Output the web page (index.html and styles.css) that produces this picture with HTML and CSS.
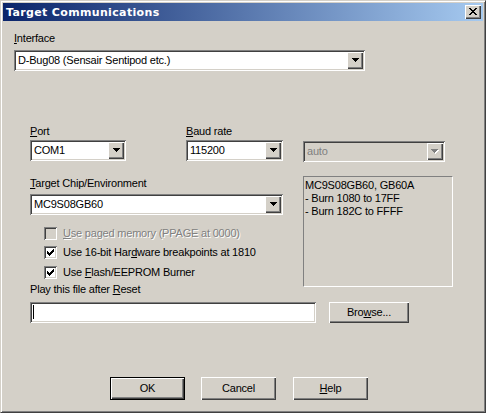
FILE: index.html
```html
<!DOCTYPE html>
<html>
<head>
<meta charset="utf-8">
<link rel="stylesheet" href="styles.css">
</head>
<body>
<div class="window">
  <div class="titlebar">
    <span class="title">Target Communications</span>
    <span class="close"><svg width="8" height="7" viewBox="0 0 8 7" shape-rendering="crispEdges"><path d="M0 0h2v1h-2zM6 0h2v1h-2zM1 1h2v1h-2zM5 1h2v1h-2zM2 2h4v1h-4zM3 3h2v1h-2zM2 4h4v1h-4zM1 5h2v1h-2zM5 5h2v1h-2zM0 6h2v1h-2zM6 6h2v1h-2z" fill="#000"/></svg></span>
  </div>
  <div class="content">
    <div class="label"><u>I</u>nterface</div>
    <div class="combo combo-interface"><span class="combo-text">D-Bug08 (Sensair Sentipod etc.)</span><span class="combo-btn"><svg width="7" height="4" viewBox="0 0 7 4" shape-rendering="crispEdges"><path d="M0 0h7v1h-7zM1 1h5v1h-5zM2 2h3v1h-3zM3 3h1v1h-1z" fill="#000"/></svg></span></div>

    <div class="mid">
      <div class="left">
        <div class="pb">
          <div class="col col-port">
            <div class="label"><u>P</u>ort</div>
            <div class="combo combo-port"><span class="combo-text">COM1</span><span class="combo-btn"><svg width="7" height="4" viewBox="0 0 7 4" shape-rendering="crispEdges"><path d="M0 0h7v1h-7zM1 1h5v1h-5zM2 2h3v1h-3zM3 3h1v1h-1z" fill="#000"/></svg></span></div>
          </div>
          <div class="col col-baud">
            <div class="label"><u>B</u>aud rate</div>
            <div class="combo combo-baud"><span class="combo-text">115200</span><span class="combo-btn"><svg width="7" height="4" viewBox="0 0 7 4" shape-rendering="crispEdges"><path d="M0 0h7v1h-7zM1 1h5v1h-5zM2 2h3v1h-3zM3 3h1v1h-1z" fill="#000"/></svg></span></div>
          </div>
        </div>
        <div class="label label-target"><u>T</u>arget Chip/Environment</div>
        <div class="combo combo-target"><span class="combo-text">MC9S08GB60</span><span class="combo-btn"><svg width="7" height="4" viewBox="0 0 7 4" shape-rendering="crispEdges"><path d="M0 0h7v1h-7zM1 1h5v1h-5zM2 2h3v1h-3zM3 3h1v1h-1z" fill="#000"/></svg></span></div>

        <div class="check check-1 disabled"><span class="box"></span><span class="check-text"><u>U</u>se paged memory (PPAGE at 0000)</span></div>
        <div class="check check-2"><span class="box"><svg width="7" height="7" viewBox="0 0 7 7" shape-rendering="crispEdges"><path d="M0 2h1v3h-1zM1 3h1v3h-1zM2 4h1v3h-1zM3 3h1v3h-1zM4 2h1v3h-1zM5 1h1v3h-1zM6 0h1v3h-1z" fill="#000"/></svg></span><span class="check-text">Use 16-bit Har<u>d</u>ware breakpoints at 1810</span></div>
        <div class="check check-3"><span class="box"><svg width="7" height="7" viewBox="0 0 7 7" shape-rendering="crispEdges"><path d="M0 2h1v3h-1zM1 3h1v3h-1zM2 4h1v3h-1zM3 3h1v3h-1zM4 2h1v3h-1zM5 1h1v3h-1zM6 0h1v3h-1z" fill="#000"/></svg></span><span class="check-text">Use <u>F</u>lash/EEPROM Burner</span></div>

        <div class="label label-play">Play this file after <u>R</u>eset</div>
      </div>
      <div class="right">
        <div class="combo combo-auto disabled"><span class="combo-text">auto</span><span class="combo-btn"><svg width="8" height="5" viewBox="0 0 8 5" shape-rendering="crispEdges"><path d="M1 1h7v1h-7zM2 2h5v1h-5zM3 3h3v1h-3zM4 4h1v1h-1z" fill="#fff"/><path d="M0 0h7v1h-7zM1 1h5v1h-5zM2 2h3v1h-3zM3 3h1v1h-1z" fill="#808080"/></svg></span></div>
        <div class="info">MC9S08GB60, GB60A<br>- Burn 1080 to 17FF<br>- Burn 182C to FFFF</div>
      </div>
    </div>

    <div class="file-row">
      <div class="edit"><span class="caret"></span></div>
      <div class="btn btn-browse">Bro<u>w</u>se...</div>
    </div>

    <div class="buttons">
      <div class="btn btn-default">OK</div>
      <div class="btn btn-cancel">Cancel</div>
      <div class="btn btn-help"><u>H</u>elp</div>
    </div>
  </div>
</div>
</body>
</html>
```
FILE: styles.css
```css
* { box-sizing: border-box; }
html, body { margin: 0; padding: 0; }
body {
  width: 486px;
  height: 413px;
  background: #d4d0c8;
  font-family: "Liberation Sans", Arial, sans-serif;
  font-size: 11px;
  line-height: 13px;
  letter-spacing: -0.2px;
  color: #000;
  overflow: hidden;
}
u { text-decoration: underline; text-underline-offset: 1px; }

.window {
  width: 486px;
  height: 413px;
  background: #d4d0c8;
  border-top: 1px solid #d4d0c8;
  border-left: 1px solid #d4d0c8;
  border-right: 1px solid #404040;
  border-bottom: 1px solid #404040;
  box-shadow: inset 1px 1px #fff, inset -1px -1px #808080;
  padding: 2px 2px 2px 2px;
  display: flex;
  flex-direction: column;
}

.titlebar {
  height: 18px;
  background: linear-gradient(to right, #0a246a, #a6caf0);
  display: flex;
  align-items: center;
  justify-content: space-between;
  padding: 0 2px 0 3px;
}
.title {
  color: #fff;
  font-family: "DejaVu Sans", sans-serif;
  font-weight: bold;
  font-size: 11px;
  letter-spacing: 0.35px;
}
.close {
  width: 16px;
  height: 14px;
  background: #d4d0c8;
  box-shadow: inset 1px 1px #fff, inset -1px -1px #404040, inset -2px -2px #808080;
  display: flex;
  align-items: center;
  justify-content: center;
  padding: 0 1px 1px 0;
}
.close svg { display: block; }

.content {
  flex: 1;
  padding-left: 11px;
  display: flex;
  flex-direction: column;
  align-items: flex-start;
}

.label { height: 13px; white-space: nowrap; }
.content > .label { margin-top: 11px; }

.combo {
  height: 21px;
  background: #fff;
  box-shadow: inset 1px 1px #808080, inset -1px -1px #fff, inset 2px 2px #404040, inset -2px -2px #d4d0c8;
  display: flex;
  align-items: center;
  justify-content: space-between;
  padding: 2px;
}
.combo-text { padding-left: 2px; white-space: nowrap; }
.combo-btn {
  width: 16px;
  height: 17px;
  background: #d4d0c8;
  box-shadow: inset 1px 1px #fff, inset -1px -1px #404040, inset -2px -2px #808080;
  display: flex;
  align-items: center;
  justify-content: center;
  padding-bottom: 1px;
}
.combo-btn svg { display: block; }
.combo-interface { width: 351px; margin-top: 5px; }

.mid {
  display: flex;
  margin-top: 54px;
  margin-left: 16px;
  align-items: flex-start;
}
.left { width: 253px; display: flex; flex-direction: column; align-items: flex-start; }
.pb { display: flex; }
.col { display: flex; flex-direction: column; }
.col .combo { margin-top: 2px; }
.combo-port { width: 96px; }
.col-baud { margin-left: 60px; }
.combo-baud { width: 97px; }

.label-target { margin-top: 16px; }
.combo-target { width: 253px; margin-top: 4px; }

.check { display: flex; align-items: center; height: 13px; }
.check-1 { margin-top: 12px; margin-left: 14px; }
.check-2 { margin-top: 6px; margin-left: 14px; }
.check-3 { margin-top: 7px; margin-left: 14px; }
.box {
  width: 13px;
  height: 13px;
  background: #fff;
  box-shadow: inset 1px 1px #808080, inset -1px -1px #fff, inset 2px 2px #404040, inset -2px -2px #d4d0c8;
  display: flex;
  align-items: center;
  justify-content: center;
}
.box svg { display: block; }
.check-text { margin-left: 6px; white-space: nowrap; }
.disabled .box { background: #d4d0c8; }
.disabled .check-text, .combo.disabled .combo-text { color: #808080; }
.check.disabled .check-text { text-shadow: 1px 1px #fff; }
.combo.disabled { background: #d4d0c8; }

.label-play { margin-top: 4px; }

.right { margin-left: 20px; display: flex; flex-direction: column; }
.combo-auto { width: 142px; margin-top: 16px; }
.info {
  width: 150px;
  height: 111px;
  margin-top: 14px;
  border-top: 1px solid #808080;
  border-left: 1px solid #808080;
  border-right: 1px solid #fff;
  border-bottom: 1px solid #fff;
  padding: 2px 0 0 1px;
  line-height: 13px;
}

.file-row { display: flex; margin-top: 6px; margin-left: 16px; }
.edit {
  width: 286px;
  height: 21px;
  background: #fff;
  box-shadow: inset 1px 1px #808080, inset -1px -1px #fff, inset 2px 2px #404040, inset -2px -2px #d4d0c8;
  padding: 3px 0 0 3px;
}
.caret { display: block; width: 1px; height: 14px; background: #000; margin-left: 0; }

.btn {
  width: 75px;
  height: 23px;
  background: #d4d0c8;
  box-shadow: inset 1px 1px #fff, inset -1px -1px #404040, inset -2px -2px #808080;
  display: flex;
  align-items: center;
  justify-content: center;
  padding-bottom: 1px;
}
.btn-browse { width: 80px; height: 21px; margin-left: 13px; }
.buttons { display: flex; margin-top: 54px; margin-left: 96px; }
.btn-default {
  border: 1px solid #000;
  box-shadow: inset 1px 1px #fff, inset -1px -1px #404040, inset -2px -2px #808080;
}
.btn-cancel { margin-left: 16px; }
.btn-help { margin-left: 17px; }
```
